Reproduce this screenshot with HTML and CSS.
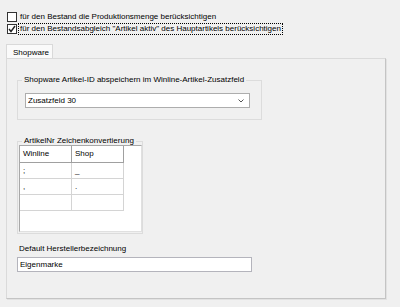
FILE: index.html
```html
<!DOCTYPE html>
<html lang="de">
<head>
    <meta charset="UTF-8">
    <title>Shopware Einstellungen</title>
    <link rel="stylesheet" href="styles.css">
</head>
<body>
    <div class="options">
        <div class="check-row">
            <span class="box"></span>
            <span class="check-label">für den Bestand die Produktionsmenge berücksichtigen</span>
        </div>
        <div class="check-row">
            <span class="box">
                <svg width="8" height="8" viewBox="0 0 8 8"><polyline points="1,4 3,6.5 7,1" fill="none" stroke="#222" stroke-width="1.4"/></svg>
            </span>
            <span class="check-label focused">für den Bestandsabgleich "Artikel aktiv" des Hauptartikels berücksichtigen</span>
        </div>
    </div>

    <div class="tabs">
        <div class="tab">Shopware</div>
        <div class="panel">
            <fieldset class="group group-id">
                <legend>Shopware Artikel-ID abspeichern im Winline-Artikel-Zusatzfeld</legend>
                <div class="combo">
                    <span>Zusatzfeld 30</span>
                    <svg width="6" height="4" viewBox="0 0 6 4"><polyline points="0.5,0.5 3,3 5.5,0.5" fill="none" stroke="#555" stroke-width="1"/></svg>
                </div>
            </fieldset>

            <fieldset class="group group-conv">
                <legend>ArtikelNr Zeichenkonvertierung</legend>
                <div class="grid-box">
                    <table class="grid">
                        <tr><th>Winline</th><th>Shop</th></tr>
                        <tr><td>;</td><td>_</td></tr>
                        <tr><td>,</td><td>.</td></tr>
                        <tr><td></td><td></td></tr>
                    </table>
                </div>
            </fieldset>

            <div class="field-label">Default Herstellerbezeichnung</div>
            <div class="text-input">Eigenmarke</div>
        </div>
    </div>
</body>
</html>
```

FILE: styles.css
```css
body {
    margin: 0;
    width: 400px;
    height: 307px;
    overflow: hidden;
    background-color: #f0f0f0;
    font-family: "Liberation Sans", Arial, sans-serif;
    font-size: 8px;
    line-height: 10px;
    color: #000;
}

.options {
    padding: 11px 0 0 7px;
}

.check-row {
    display: flex;
    align-items: center;
    height: 12px;
}

.box {
    width: 8px;
    height: 8px;
    border: 1px solid #333;
    background-color: #fff;
    display: flex;
    align-items: center;
    justify-content: center;
    margin-right: 1px;
}

.check-label {
    border: 1px solid transparent;
    padding: 0 1px;
}

.check-label.focused {
    border: 1px dotted #000;
}

.tabs {
    margin: 9px 0 0 6px;
}

.tab {
    width: 47px;
    height: 14px;
    box-sizing: border-box;
    border: 1px solid #d9d9d9;
    border-bottom: none;
    background-color: #fafafa;
    padding: 3px 0 0 6px;
}

.panel {
    width: 380px;
    height: 241px;
    box-sizing: border-box;
    border: 1px solid #dadada;
    border-right-color: #c4c4c4;
    border-bottom-color: #c4c4c4;
    box-shadow: 1px 1px 0 #e2e2e2;
    padding: 0 0 0 10px;
}

.group {
    margin: 0;
    padding: 0;
    border: 1px solid #dcdcdc;
    min-width: 0;
}

.group legend {
    margin-left: 4px;
    padding: 0 2px;
    line-height: 10px;
    font-weight: normal;
}

.group-id {
    margin-top: 16px;
    width: 245px;
    height: 45px;
    box-sizing: border-box;
}

.combo {
    margin: 8px 0 0 7px;
    width: 225px;
    height: 15px;
    box-sizing: border-box;
    border: 1px solid #adadad;
    background-color: #fff;
    display: flex;
    align-items: center;
    justify-content: space-between;
    padding: 0 5px 0 2px;
}

.group-conv {
    margin-top: 16px;
    width: 126px;
    height: 98px;
    box-sizing: border-box;
}

.grid-box {
    margin: -1px 0 0 1px;
    width: 123px;
    height: 87px;
    box-sizing: border-box;
    background-color: #fff;
    border: 1px solid #a8a8a8;
    border-right-color: #e0e0e0;
    border-bottom-color: #e0e0e0;
}

.grid {
    border-collapse: collapse;
}

.grid th {
    width: 48px;
    height: 16px;
    padding: 0 0 0 3px;
    text-align: left;
    font-weight: normal;
    border-right: 1px solid #a0a0a0;
    border-bottom: 1px solid #a0a0a0;
}

.grid td {
    width: 48px;
    height: 15px;
    padding: 0 0 0 3px;
    border-right: 1px solid #d4d4d4;
    border-bottom: 1px solid #d4d4d4;
}

.field-label {
    margin: 10px 0 0 2px;
}

.text-input {
    margin-top: 3px;
    width: 235px;
    height: 15px;
    box-sizing: border-box;
    border: 1px solid #b4b4bc;
    background-color: #fff;
    padding: 2px 0 0 2px;
}
```
